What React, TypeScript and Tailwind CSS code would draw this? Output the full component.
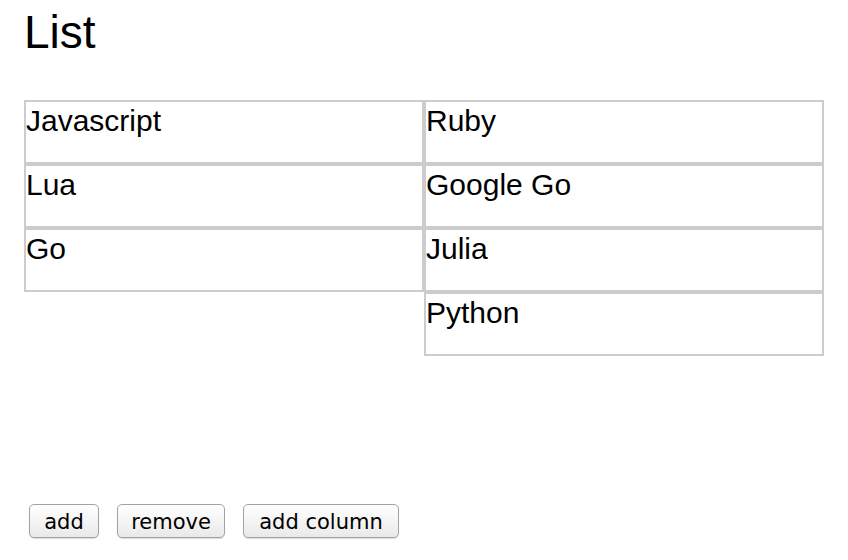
import React from 'react';

const leftItems = ['Javascript', 'Lua', 'Go'];
const rightItems = ['Ruby', 'Google Go', 'Julia', 'Python'];

const Cell: React.FC<{ label: string }> = ({ label }) => (
  <div className="w-[400px] h-[64px] border-2 border-[#cccccc] pt-[2px] text-[30px] leading-[34px] text-black">
    {label}
  </div>
);

const Button: React.FC<{ label: string; width: string }> = ({ label, width }) => (
  <button
    className={`${width} h-[34px] rounded-[5px] border border-[#a3a3a3] bg-gradient-to-b from-white to-[#e9e9e9] shadow-[0_1px_1px_rgba(0,0,0,0.15)] pt-[2px] text-[21px] leading-[30px] text-black text-center`}
    style={{ fontFamily: '"DejaVu Sans", sans-serif' }}
  >
    {label}
  </button>
);

const App: React.FC = () => {
  return (
    <div className="w-[848px] h-[560px] bg-white" style={{ fontFamily: '"Liberation Sans", Arial, sans-serif' }}>
      <h1 className="pt-[6px] pl-[24px] text-[46px] leading-[52px] text-black">List</h1>
      <div className="flex pl-[24px] mt-[42px] h-[256px]">
        <div className="flex flex-col">
          {leftItems.map((item) => (
            <Cell key={item} label={item} />
          ))}
        </div>
        <div className="flex flex-col">
          {rightItems.map((item) => (
            <Cell key={item} label={item} />
          ))}
        </div>
      </div>
      <div className="flex gap-[18px] pl-[29px] mt-[148px]">
        <Button label="add" width="w-[70px]" />
        <Button label="remove" width="w-[108px]" />
        <Button label="add column" width="w-[156px]" />
      </div>
    </div>
  );
};

export default App;
